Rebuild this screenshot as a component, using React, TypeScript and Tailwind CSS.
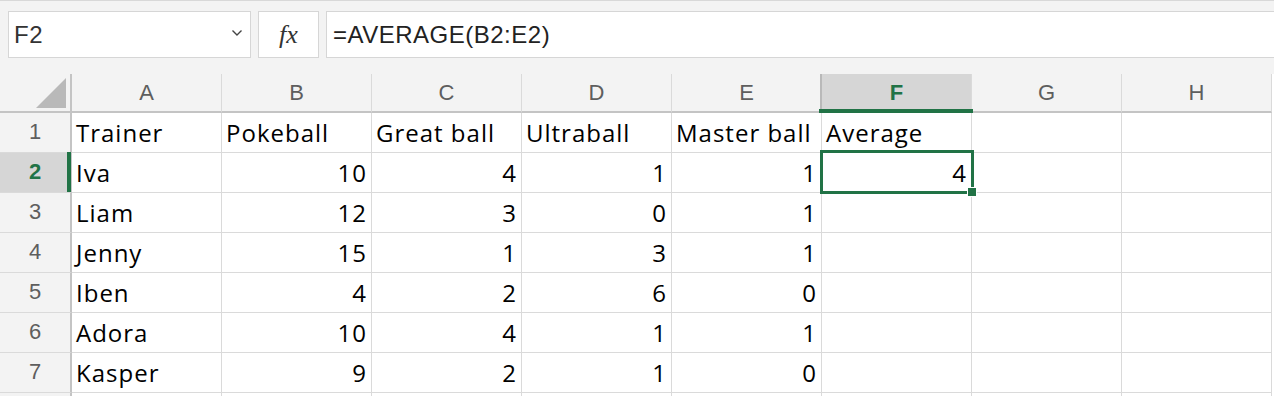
import { Fragment } from 'react'

// Spreadsheet snapshot: formula bar + a small trainer/ball table, F2 selected.
const COLS = ['A', 'B', 'C', 'D', 'E', 'F', 'G', 'H']

const ROWS: (string | number)[][] = [
  ['Trainer', 'Pokeball', 'Great ball', 'Ultraball', 'Master ball', 'Average'],
  ['Iva', 10, 4, 1, 1, 4],
  ['Liam', 12, 3, 0, 1],
  ['Jenny', 15, 1, 3, 1],
  ['Iben', 4, 2, 6, 0],
  ['Adora', 10, 4, 1, 1],
  ['Kasper', 9, 2, 1, 0],
]

const SEL_COL = 5 // F
const SEL_ROW = 1 // row 2

function FormulaBar() {
  return (
    <div className="flex h-[74px] items-start gap-[7px] border-t border-[#d8d8d8] bg-[#f3f3f3] pl-2 pt-[10px] font-['Liberation_Sans',sans-serif]">
      <div className="flex h-[47px] w-[243px] items-center justify-between border border-[#d6d6d6] bg-white pl-[5px] pr-[7px]">
        <span className="text-[24px] tracking-[0.5px] text-[#333]">F2</span>
        <svg width="12" height="8" viewBox="0 0 12 8" className="mb-[4px]">
          <polyline points="1.5,1.5 6,6 10.5,1.5" fill="none" stroke="#444" strokeWidth="1.4" />
        </svg>
      </div>
      <div className="flex h-[47px] w-[61px] items-center justify-center border border-[#d6d6d6] bg-white">
        <span className="font-['Liberation_Serif',serif] text-[26px] italic text-[#333]">fx</span>
      </div>
      <div className="flex h-[47px] flex-1 items-center border-y border-l border-[#d6d6d6] bg-white pl-[6px]">
        <span className="text-[24px] tracking-[0.5px] text-[#222]">=AVERAGE(B2:E2)</span>
      </div>
    </div>
  )
}

export default function App() {
  return (
    <div className="h-[396px] w-[1274px] overflow-hidden bg-white">
      <FormulaBar />
      <div className="grid grid-cols-[72px_repeat(8,150px)] font-['Liberation_Sans',sans-serif]">
        {/* column header row */}
        <div className="flex h-[39px] items-end justify-end border-b-2 border-r-2 border-[#c4c4c4] bg-[#f3f3f3] pb-[3px] pr-[4px]">
          <svg width="30" height="30" viewBox="0 0 30 30">
            <polygon points="30,0 30,30 0,30" fill="#b9b9b9" />
          </svg>
        </div>
        {COLS.map((c, i) => {
          const sel = i === SEL_COL
          return (
            <div
              key={c}
              className={`relative flex h-[39px] items-center justify-center border-b-2 border-r border-b-[#c4c4c4] border-r-[#dadada] text-[22px] ${
                sel ? 'bg-[#d6d6d6] font-bold text-[#217346] shadow-[-2px_0_0_#b9b9b9]' : 'bg-[#f3f3f3] text-[#5e5e5e]'
              }`}
            >
              {c}
              {sel && <div className="absolute -bottom-[2px] -left-[3px] -right-[2px] z-10 h-[4px] bg-[#217346]" />}
            </div>
          )
        })}

        {ROWS.map((row, r) => (
          <Fragment key={r}>
            <div
              className={`relative flex h-[40px] items-end justify-center border-b border-r-2 border-b-[#dadada] border-r-[#c4c4c4] pb-[8px] text-[22px] leading-6 ${
                r === SEL_ROW ? 'bg-[#d6d6d6] font-bold text-[#217346]' : 'bg-[#f3f3f3] text-[#5e5e5e]'
              }`}
            >
              {r + 1}
              {r === SEL_ROW && <div className="absolute -right-[1px] -top-[1px] bottom-0 z-10 w-[4px] bg-[#217346]" />}
            </div>
            {COLS.map((_, c) => {
              const v = row[c]
              const num = typeof v === 'number'
              const sel = r === SEL_ROW && c === SEL_COL
              return (
                <div
                  key={c}
                  className={`relative flex h-[40px] items-end border-b border-r border-[#dadada] pb-[7px] font-['Open_Sans',sans-serif] text-[24px] leading-6 tracking-[1px] text-black ${
                    num ? 'justify-end pr-[4px]' : 'justify-start pl-[4px]'
                  }`}
                >
                  {v}
                  {sel && (
                    <>
                      <div className="absolute -bottom-[2px] -left-[2px] -right-[3px] -top-[3px] z-10 border-[3px] border-[#217346]" />
                      <div className="absolute -bottom-[5px] -right-[6px] z-20 h-[10px] w-[10px] border border-white bg-[#217346]" />
                    </>
                  )}
                </div>
              )
            })}
          </Fragment>
        ))}
        <div className="h-[20px] border-r-2 border-[#c4c4c4] bg-[#f3f3f3]" />
        {COLS.map((c) => (
          <div key={c} className="h-[20px] border-r border-[#dadada]" />
        ))}
      </div>
    </div>
  )
}
